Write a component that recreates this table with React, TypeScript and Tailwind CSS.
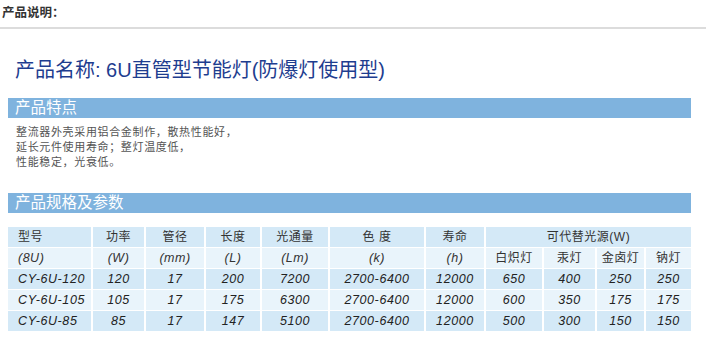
const font = { fontFamily: '"Liberation Sans", "Noto Sans CJK SC", sans-serif' };

const rows = [
  ['CY-6U-120', '120', '17', '200', '7200', '2700-6400', '12000', '650', '400', '250', '250'],
  ['CY-6U-105', '105', '17', '175', '6300', '2700-6400', '12000', '600', '350', '175', '175'],
  ['CY-6U-85', '85', '17', '147', '5100', '2700-6400', '12000', '500', '300', '150', '150'],
];

const widths = [83, 51, 58, 54, 66, 94, 58, 56, 51, 47, 45];

function Bar({ title }: { title: string }) {
  return (
    <div className="ml-[8px] w-[683px] h-[20px] bg-[#7fb3de] pl-[7px] text-[15.5px] leading-[20px] text-white">
      {title}
    </div>
  );
}

export default function App() {
  const dark = 'bg-[#d4e9f7]';
  const light = 'bg-[#e9f4fb]';
  return (
    <div className="w-[706px] h-[351px] overflow-hidden bg-white" style={font}>
      <div className="pl-[2px] pt-[5px] text-[12.5px] font-bold leading-[16px] text-[#333]">产品说明：</div>
      <div className="mt-[6px] h-[2px] bg-[#dcdcdc]" />

      <h1 className="mt-[29px] pl-[15px] text-[20px] leading-[24px] text-[#1e3d8f]">
        产品名称: 6U直管型节能灯(防爆灯使用型)
      </h1>

      <div className="mt-[16px]">
        <Bar title="产品特点" />
      </div>
      <div className="mt-[7px] pl-[16px] text-[11px] leading-[15px] tracking-[0.65px] text-[#555]">
        <p>整流器外壳采用铝合金制作，散热性能好，</p>
        <p>延长元件使用寿命；整灯温度低，</p>
        <p>性能稳定，光衰低。</p>
      </div>

      <div className="mt-[23px]">
        <Bar title="产品规格及参数" />
      </div>

      <table className="ml-[6px] mt-[13px] w-[687px] table-fixed border-separate border-spacing-x-[2px] border-spacing-y-[1.5px] text-[12px] text-[#333]">
        <colgroup>
          {widths.map((w, i) => (
            <col key={i} style={{ width: w }} />
          ))}
        </colgroup>
        <tbody>
          <tr className="h-[20px] tracking-[0.5px]">
            <td className={`${dark} pl-[10px] text-left`}>型号</td>
            <td className={`${dark} text-center`}>功率</td>
            <td className={`${dark} text-center`}>管径</td>
            <td className={`${dark} text-center`}>长度</td>
            <td className={`${dark} text-center`}>光通量</td>
            <td className={`${dark} text-center`}>色 度</td>
            <td className={`${dark} text-center`}>寿命</td>
            <td colSpan={4} className={`${dark} text-center`}>可代替光源(W)</td>
          </tr>
          <tr className="h-[20px] text-[12.5px] tracking-[0.5px]">
            <td className={`${light} pl-[10px] text-left italic`}>(8U)</td>
            <td className={`${light} text-center italic`}>(W)</td>
            <td className={`${light} text-center italic`}>(mm)</td>
            <td className={`${light} text-center italic`}>(L)</td>
            <td className={`${light} text-center italic`}>(Lm)</td>
            <td className={`${light} text-center italic`}>(k)</td>
            <td className={`${light} text-center italic`}>(h)</td>
            <td className={`${light} text-center text-[12px]`}>白炽灯</td>
            <td className={`${light} text-center text-[12px]`}>汞灯</td>
            <td className={`${light} text-center text-[12px]`}>金卤灯</td>
            <td className={`${light} text-center text-[12px]`}>钠灯</td>
          </tr>
          {rows.map((r, i) => (
            <tr key={r[0]} className="h-[20px]">
              {r.map((c, j) => (
                <td
                  key={j}
                  className={`${i % 2 === 0 ? dark : light} text-[12.5px] italic tracking-[0.6px] text-[#222] ${
                    j === 0 ? 'pl-[10px] text-left' : 'text-center'
                  }`}
                >
                  {c}
                </td>
              ))}
            </tr>
          ))}
        </tbody>
      </table>
    </div>
  );
}
